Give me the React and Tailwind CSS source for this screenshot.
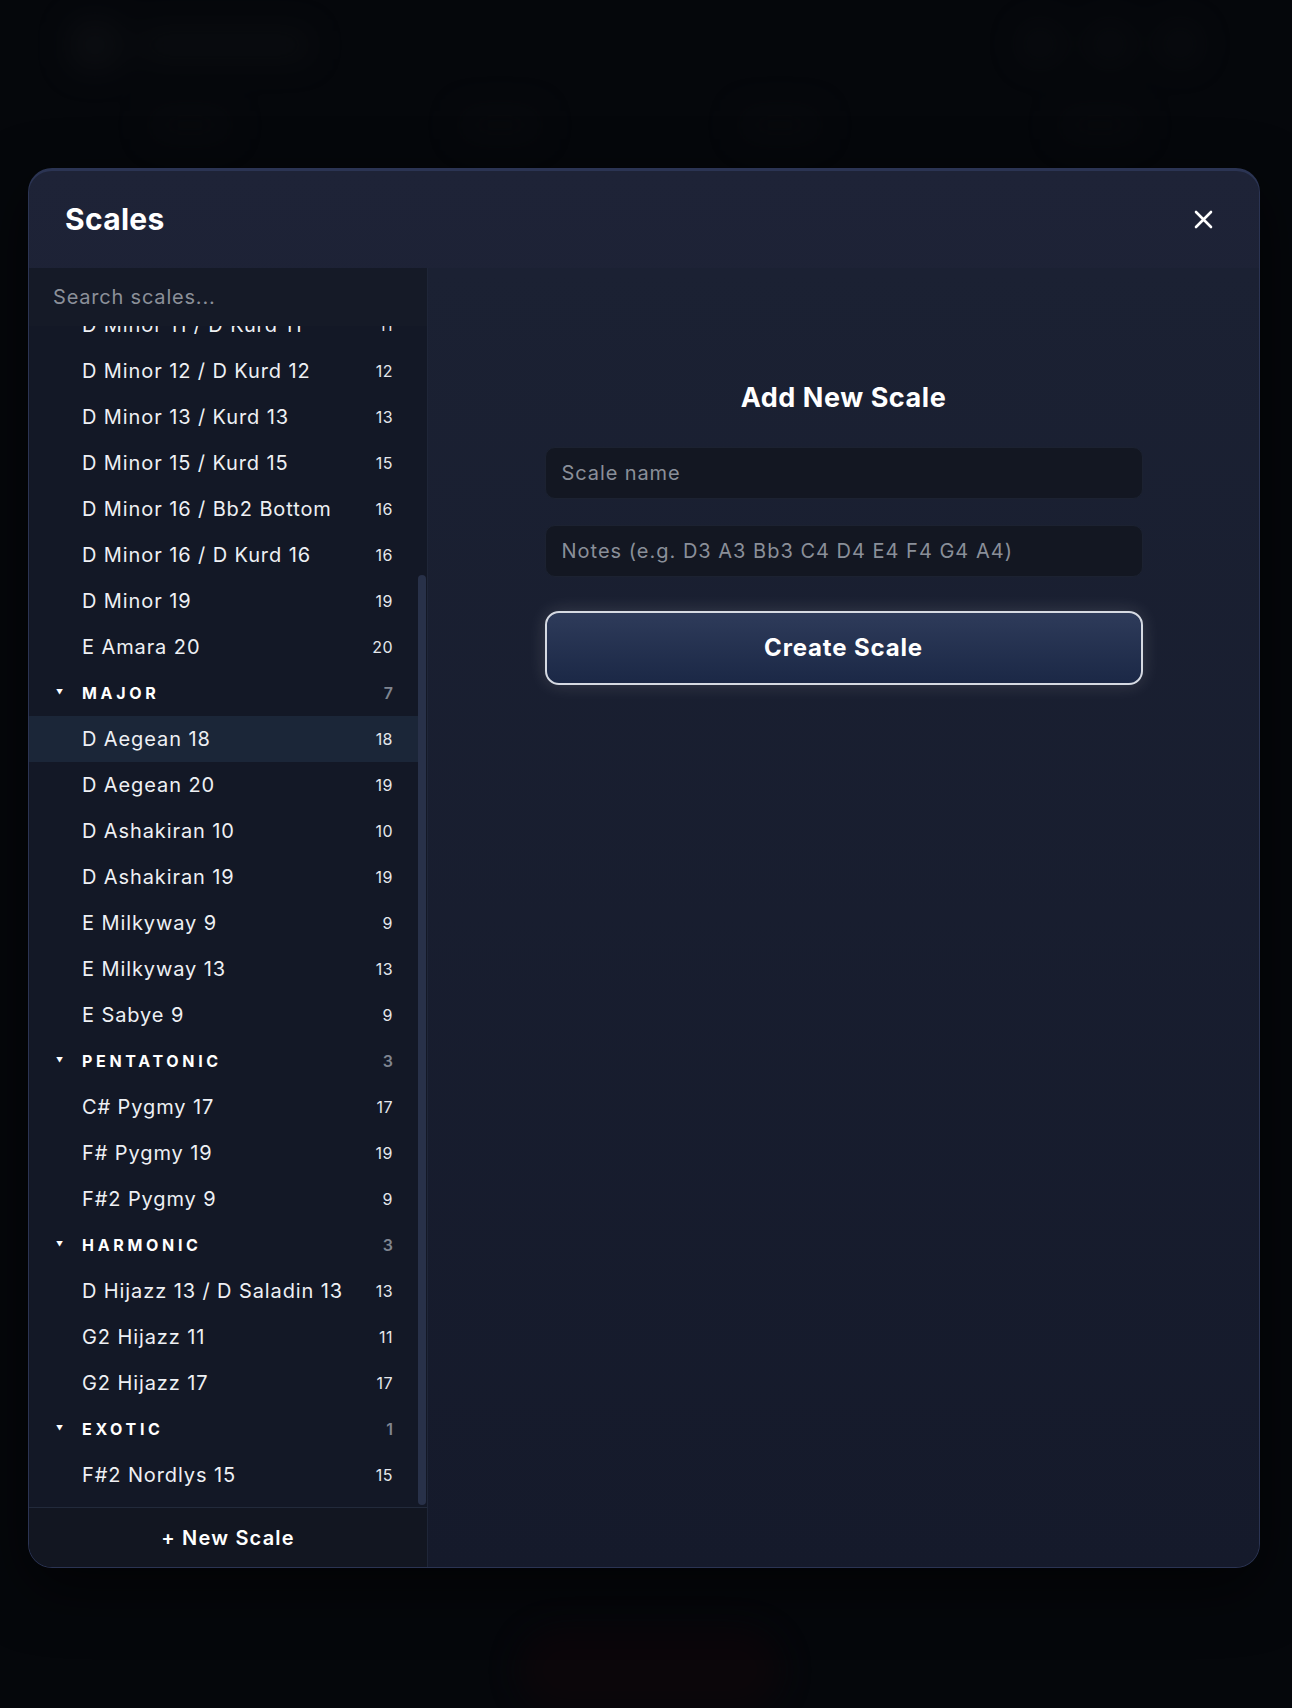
import React from 'react';

const groups = [
  {
    name: null,
    items: [
      ['D Minor 11 / D Kurd 11', 11],
      ['D Minor 12 / D Kurd 12', 12],
      ['D Minor 13 / Kurd 13', 13],
      ['D Minor 15 / Kurd 15', 15],
      ['D Minor 16 / Bb2 Bottom', 16],
      ['D Minor 16 / D Kurd 16', 16],
      ['D Minor 19', 19],
      ['E Amara 20', 20],
    ],
  },
  {
    name: 'Major',
    items: [
      ['D Aegean 18', 18],
      ['D Aegean 20', 19],
      ['D Ashakiran 10', 10],
      ['D Ashakiran 19', 19],
      ['E Milkyway 9', 9],
      ['E Milkyway 13', 13],
      ['E Sabye 9', 9],
    ],
  },
  {
    name: 'Pentatonic',
    items: [
      ['C# Pygmy 17', 17],
      ['F# Pygmy 19', 19],
      ['F#2 Pygmy 9', 9],
    ],
  },
  {
    name: 'Harmonic',
    items: [
      ['D Hijazz 13 / D Saladin 13', 13],
      ['G2 Hijazz 11', 11],
      ['G2 Hijazz 17', 17],
    ],
  },
  {
    name: 'Exotic',
    items: [['F#2 Nordlys 15', 15]],
  },
];

const selected = 'D Aegean 18';

const ScaleRow = ({ label, count }) => (
  <div
    className={`h-[46px] flex items-center justify-between pl-[53px] pr-[25px] ${
      label === selected ? 'bg-[#1b2638]' : ''
    }`}
  >
    <span className="text-[20px] tracking-[0.045em] text-[#eef0f4] whitespace-nowrap">{label}</span>
    <span className="text-[16px] tracking-[0.03em] text-[#e4e7ec]">{count}</span>
  </div>
);

const GroupHeader = ({ name, count }) => (
  <div className="h-[46px] flex items-center justify-between pr-[25px]">
    <div className="flex items-center">
      <span className="w-[53px] pl-[27px] text-[7px] text-white">▼</span>
      <span className="text-[16px] font-bold uppercase tracking-[0.23em] text-white">{name}</span>
    </div>
    <span className="text-[16px] font-semibold text-[#7f8590]">{count}</span>
  </div>
);

export default function App() {
  return (
    <div
      className="relative w-[1292px] h-[1708px] overflow-hidden bg-[#05070b]"
      style={{ fontFamily: 'Inter, "Noto Sans", sans-serif' }}
    >
      {/* blurred page behind the modal */}
      <div className="absolute inset-0 blur-[16px] opacity-40">
        <div className="absolute left-[70px] top-[20px] w-[50px] h-[50px] rounded-xl bg-[#16181c]" />
        <div className="absolute left-[140px] top-[30px] w-[170px] h-[30px] rounded bg-[#131518]" />
        <div className="absolute left-[1020px] top-[24px] w-[40px] h-[40px] rounded-full bg-[#111316]" />
        <div className="absolute left-[1090px] top-[24px] w-[40px] h-[40px] rounded-full bg-[#111316]" />
        <div className="absolute left-[1160px] top-[24px] w-[40px] h-[40px] rounded-full bg-[#111316]" />
        <div className="absolute left-[150px] top-[110px] w-[80px] h-[30px] rounded bg-[#0d0f12]" />
        <div className="absolute left-[460px] top-[110px] w-[80px] h-[30px] rounded bg-[#0d0f12]" />
        <div className="absolute left-[740px] top-[110px] w-[80px] h-[30px] rounded bg-[#0d0f12]" />
        <div className="absolute left-[1060px] top-[110px] w-[80px] h-[30px] rounded bg-[#0d0f12]" />
        <div className="absolute left-[520px] top-[1630px] w-[260px] h-[80px] rounded-full bg-[#16060a]" />
      </div>

      <div className="absolute inset-0 pt-[168px] pl-[28px]">
        <div className="w-[1232px] h-[1400px] flex flex-col rounded-[24px] border border-t-[3px] border-[#2b3453] bg-gradient-to-b from-[#1e2337] to-[#151a2a] overflow-hidden shadow-[0_20px_60px_rgba(0,0,0,0.6)]">
          <div className="h-[97px] shrink-0 flex items-center justify-between pl-[36px] pr-[44px]">
            <h2 className="text-[30px] font-bold tracking-[0.01em] text-white">Scales</h2>
            <button className="w-[24px] h-[24px] flex items-center justify-center">
              <svg width="19" height="19" viewBox="0 0 19 19" fill="none" stroke="white" strokeWidth="2.6" strokeLinecap="round">
                <path d="M2 2L17 17M17 2L2 17" />
              </svg>
            </button>
          </div>

          <div className="flex-1 flex min-h-0">
            <div className="w-[399px] shrink-0 flex flex-col border-r border-[#1f2638] bg-[#131826]">
              <div className="h-[58px] shrink-0 flex items-center px-[24px] bg-[#151a27] z-10">
                <input
                  className="w-full bg-transparent outline-none text-[20px] tracking-[0.04em] text-white placeholder:text-[#8b9099]"
                  placeholder="Search scales..."
                />
              </div>
              <div className="relative flex-1 overflow-hidden">
                <div className="-mt-[24px] pr-[9px]">
                  {groups.map((g, i) => (
                    <div key={i}>
                      {g.name && <GroupHeader name={g.name} count={g.items.length} />}
                      {g.items.map(([label, count]) => (
                        <ScaleRow key={label} label={label} count={count} />
                      ))}
                    </div>
                  ))}
                </div>
                <div className="absolute right-[1px] top-[249px] w-[8px] h-[930px] rounded-full bg-[#283149]" />
              </div>
              <div className="h-[60px] shrink-0 flex items-center justify-center border-t border-[#222a3b] bg-[#121621]">
                <span className="text-[20px] font-semibold tracking-[0.06em] text-white">+ New Scale</span>
              </div>
            </div>

            <div className="flex-1 bg-gradient-to-b from-[#1b2133] to-[#151a2b]">
              <div className="w-[598px] mx-auto pt-[113px] flex flex-col">
                <h3 className="text-center text-[27px] font-bold tracking-[0.02em] text-white leading-[34px]">Add New Scale</h3>
                <input
                  className="mt-[32px] h-[52px] rounded-[10px] border border-[#1c2231] bg-[#131722] px-[16px] text-[20px] tracking-[0.045em] text-white outline-none placeholder:text-[#8a8f99]"
                  placeholder="Scale name"
                />
                <input
                  className="mt-[26px] h-[52px] rounded-[10px] border border-[#1c2231] bg-[#131722] px-[16px] text-[20px] tracking-[0.05em] text-white outline-none placeholder:text-[#8a8f99]"
                  placeholder="Notes (e.g. D3 A3 Bb3 C4 D4 E4 F4 G4 A4)"
                />
                <button className="mt-[34px] h-[74px] rounded-[14px] border-2 border-[#d6dae2] bg-gradient-to-b from-[#2e3b5a] to-[#1b2846] text-[24px] font-bold tracking-[0.035em] text-white shadow-[0_0_18px_rgba(255,255,255,0.14)]">
                  Create Scale
                </button>
              </div>
            </div>
          </div>
        </div>
      </div>
    </div>
  );
}
